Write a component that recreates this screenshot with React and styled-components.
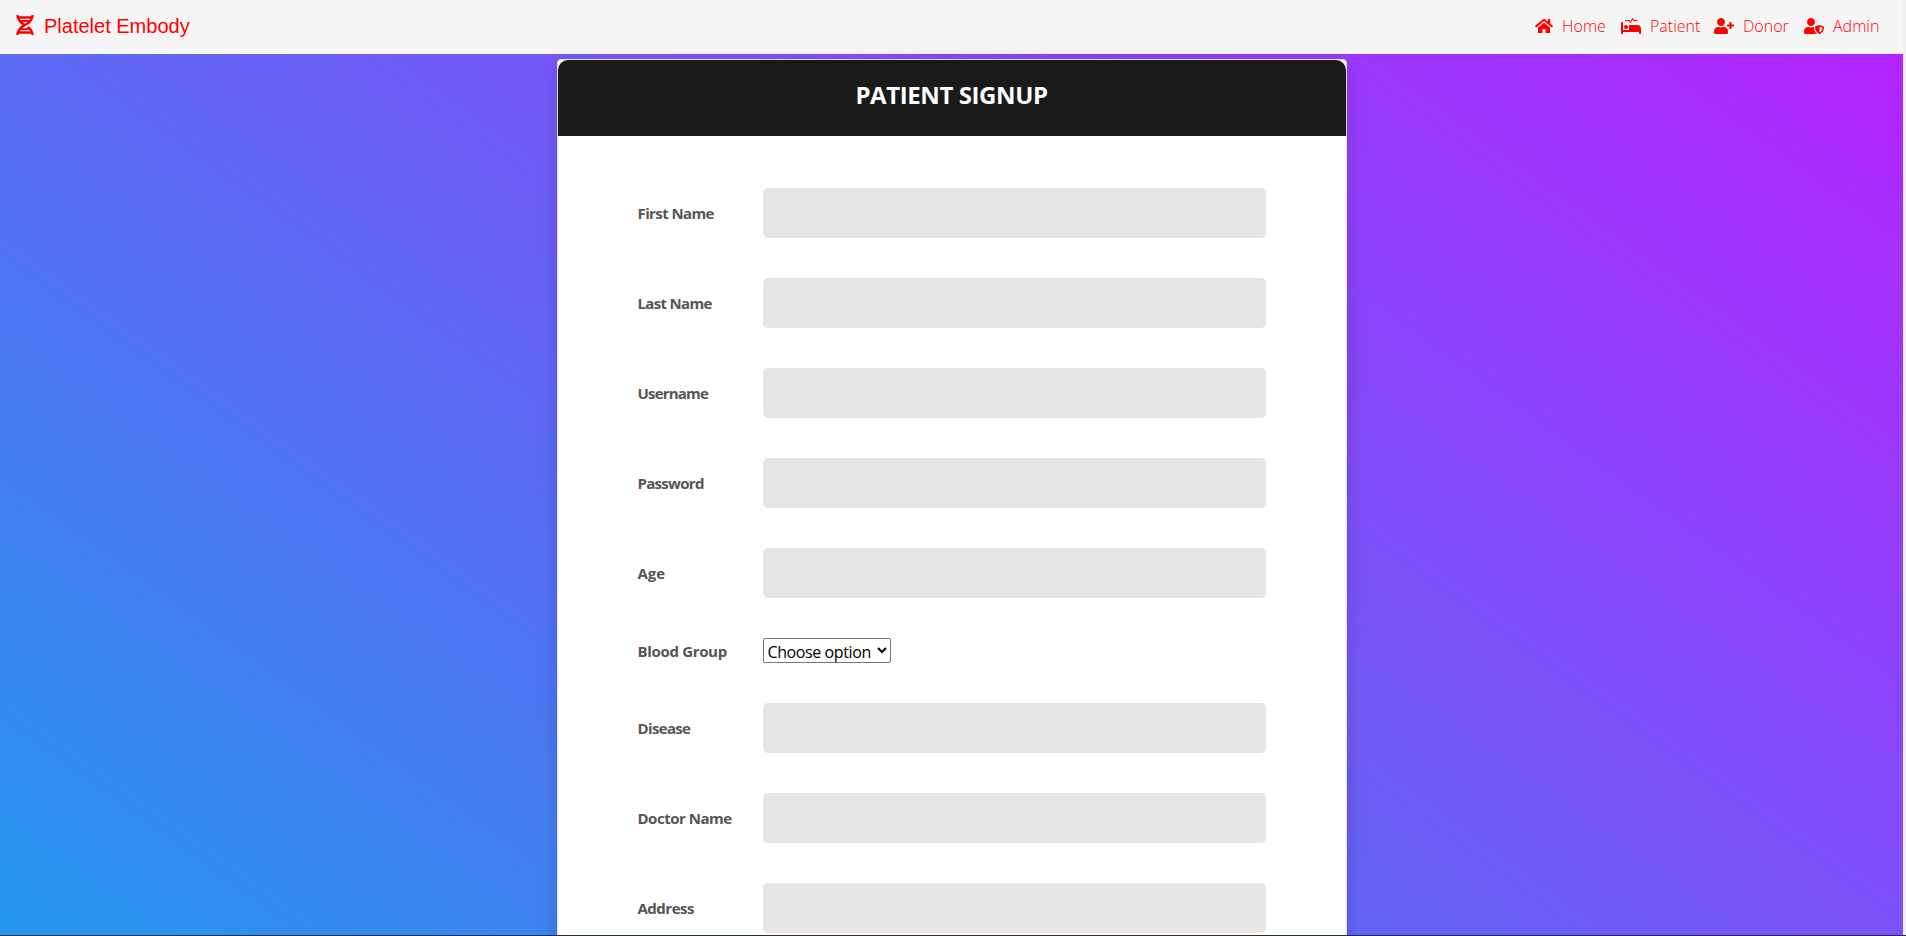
import React from "react";
import styled, { createGlobalStyle } from "styled-components";
import { FaDna, FaHome, FaProcedures, FaUserPlus, FaUserShield } from "react-icons/fa";

const GlobalStyle = createGlobalStyle`
  *, *::before, *::after { box-sizing: border-box; }
  html, body { margin: 0; height: 936px; overflow: hidden; }
  body { background: #f0f0f0; font-family: "Open Sans", "Noto Sans", sans-serif; }
`;

const Screen = styled.div`
  height: 936px;
  display: flex;
  flex-direction: column;
  overflow: hidden;
`;

const Viewport = styled.div`
  height: 935px;
  flex: none;
  padding-right: 3px;
  overflow: hidden;
`;

const DesktopEdge = styled.div`
  height: 1px;
  flex: none;
  background: #1d3040;
`;

const Page = styled.div`
  height: 1370px;
  background: linear-gradient(to top right, #08aeea 0%, #b721ff 100%);
`;

const NavBar = styled.nav`
  height: 54px;
  padding: 0 24px 0 16px;
  display: flex;
  align-items: center;
  justify-content: space-between;
  background: #f5f5f5;
  color: #ff0000;
`;

const Brand = styled.a`
  display: flex;
  align-items: center;
  gap: 10px;
  font: 20px/24px "Liberation Sans", Arial, sans-serif;
  padding-bottom: 4px;
  svg { width: 18px; height: 20px; }
  span { padding-top: 2px; }
`;

const NavLinks = styled.div`
  display: flex;
  align-items: center;
  gap: 16px;
  padding-bottom: 2px;
`;

const NavLink = styled.a`
  display: flex;
  align-items: center;
  gap: 9px;
  font-size: 16px;
  font-weight: 300;
  line-height: 22px;
  svg { width: ${(p) => p.$icon}px; height: 16px; }
  span { width: ${(p) => p.$text}px; white-space: nowrap; }
`;

const Main = styled.main`
  padding-top: 5px;
`;

const Card = styled.section`
  width: 790px;
  height: 1180px;
  margin: 0 auto;
  border: 1px solid #dfdfdf;
  border-radius: 4px;
  background: #fff;
  box-shadow: 0 8px 20px 0 rgba(0, 0, 0, 0.15);
`;

const CardHeading = styled.header`
  height: 76px;
  padding-top: 17px;
  border-radius: 10px 10px 0 0;
  background: #1a1a1a;
`;

const Title = styled.h2`
  margin: 0;
  color: #fff;
  font-size: 24px;
  font-weight: 700;
  line-height: 36px;
  letter-spacing: -0.4px;
  text-align: center;
`;

const Form = styled.form`
  padding: 52px 80px 0;
  display: flex;
  flex-direction: column;
  gap: 40px;
`;

const Row = styled.div`
  display: grid;
  grid-template-columns: 125px 503px;
  align-items: center;
`;

const Label = styled.label`
  color: #555;
  font-size: 15px;
  font-weight: 700;
  line-height: 22px;
  letter-spacing: ${(p) => p.$track}px;
`;

const Input = styled.input`
  width: 100%;
  height: 50px;
  border: 0;
  border-radius: 5px;
  background: #e5e5e5;
`;

const Select = styled.select`
  width: 128px;
  height: 25px;
  padding: 1px 0 0;
  border: 1px solid #767676;
  border-radius: 2px;
  background: #fff;
  color: #000;
  font: 400 16px/22px "Open Sans", sans-serif;
  letter-spacing: -0.4px;
`;

const links = [
  { name: "Home", Icon: FaHome, icon: 18, text: 43 },
  { name: "Patient", Icon: FaProcedures, icon: 20, text: 48 },
  { name: "Donor", Icon: FaUserPlus, icon: 20, text: 45 },
  { name: "Admin", Icon: FaUserShield, icon: 20, text: 46 },
];

const fields = [
  { name: "First Name", track: -0.6 },
  { name: "Last Name", track: -0.68 },
  { name: "Username", track: -0.8 },
  { name: "Password", track: -0.7 },
  { name: "Age", track: 0 },
  { name: "Blood Group", track: -0.33, options: ["Choose option"] },
  { name: "Disease", track: -0.65 },
  { name: "Doctor Name", track: -0.48 },
  { name: "Address", track: -0.5 },
];

export default function App() {
  return (
    <Screen>
      <GlobalStyle />
      <Viewport>
        <Page>
          <NavBar>
            <Brand>
              <FaDna />
              <span>Platelet Embody</span>
            </Brand>
            <NavLinks>
              {links.map(({ name, Icon, icon, text }) => (
                <NavLink key={name} $icon={icon} $text={text}>
                  <Icon />
                  <span>{name}</span>
                </NavLink>
              ))}
            </NavLinks>
          </NavBar>
          <Main>
            <Card>
              <CardHeading>
                <Title>PATIENT SIGNUP</Title>
              </CardHeading>
              <Form>
                {fields.map(({ name, track, options }) => (
                  <Row key={name}>
                    <Label $track={track}>{name}</Label>
                    {options ? (
                      <Select>
                        {options.map((option) => (
                          <option key={option}>{option}</option>
                        ))}
                      </Select>
                    ) : (
                      <Input />
                    )}
                  </Row>
                ))}
              </Form>
            </Card>
          </Main>
        </Page>
      </Viewport>
      <DesktopEdge />
    </Screen>
  );
}
